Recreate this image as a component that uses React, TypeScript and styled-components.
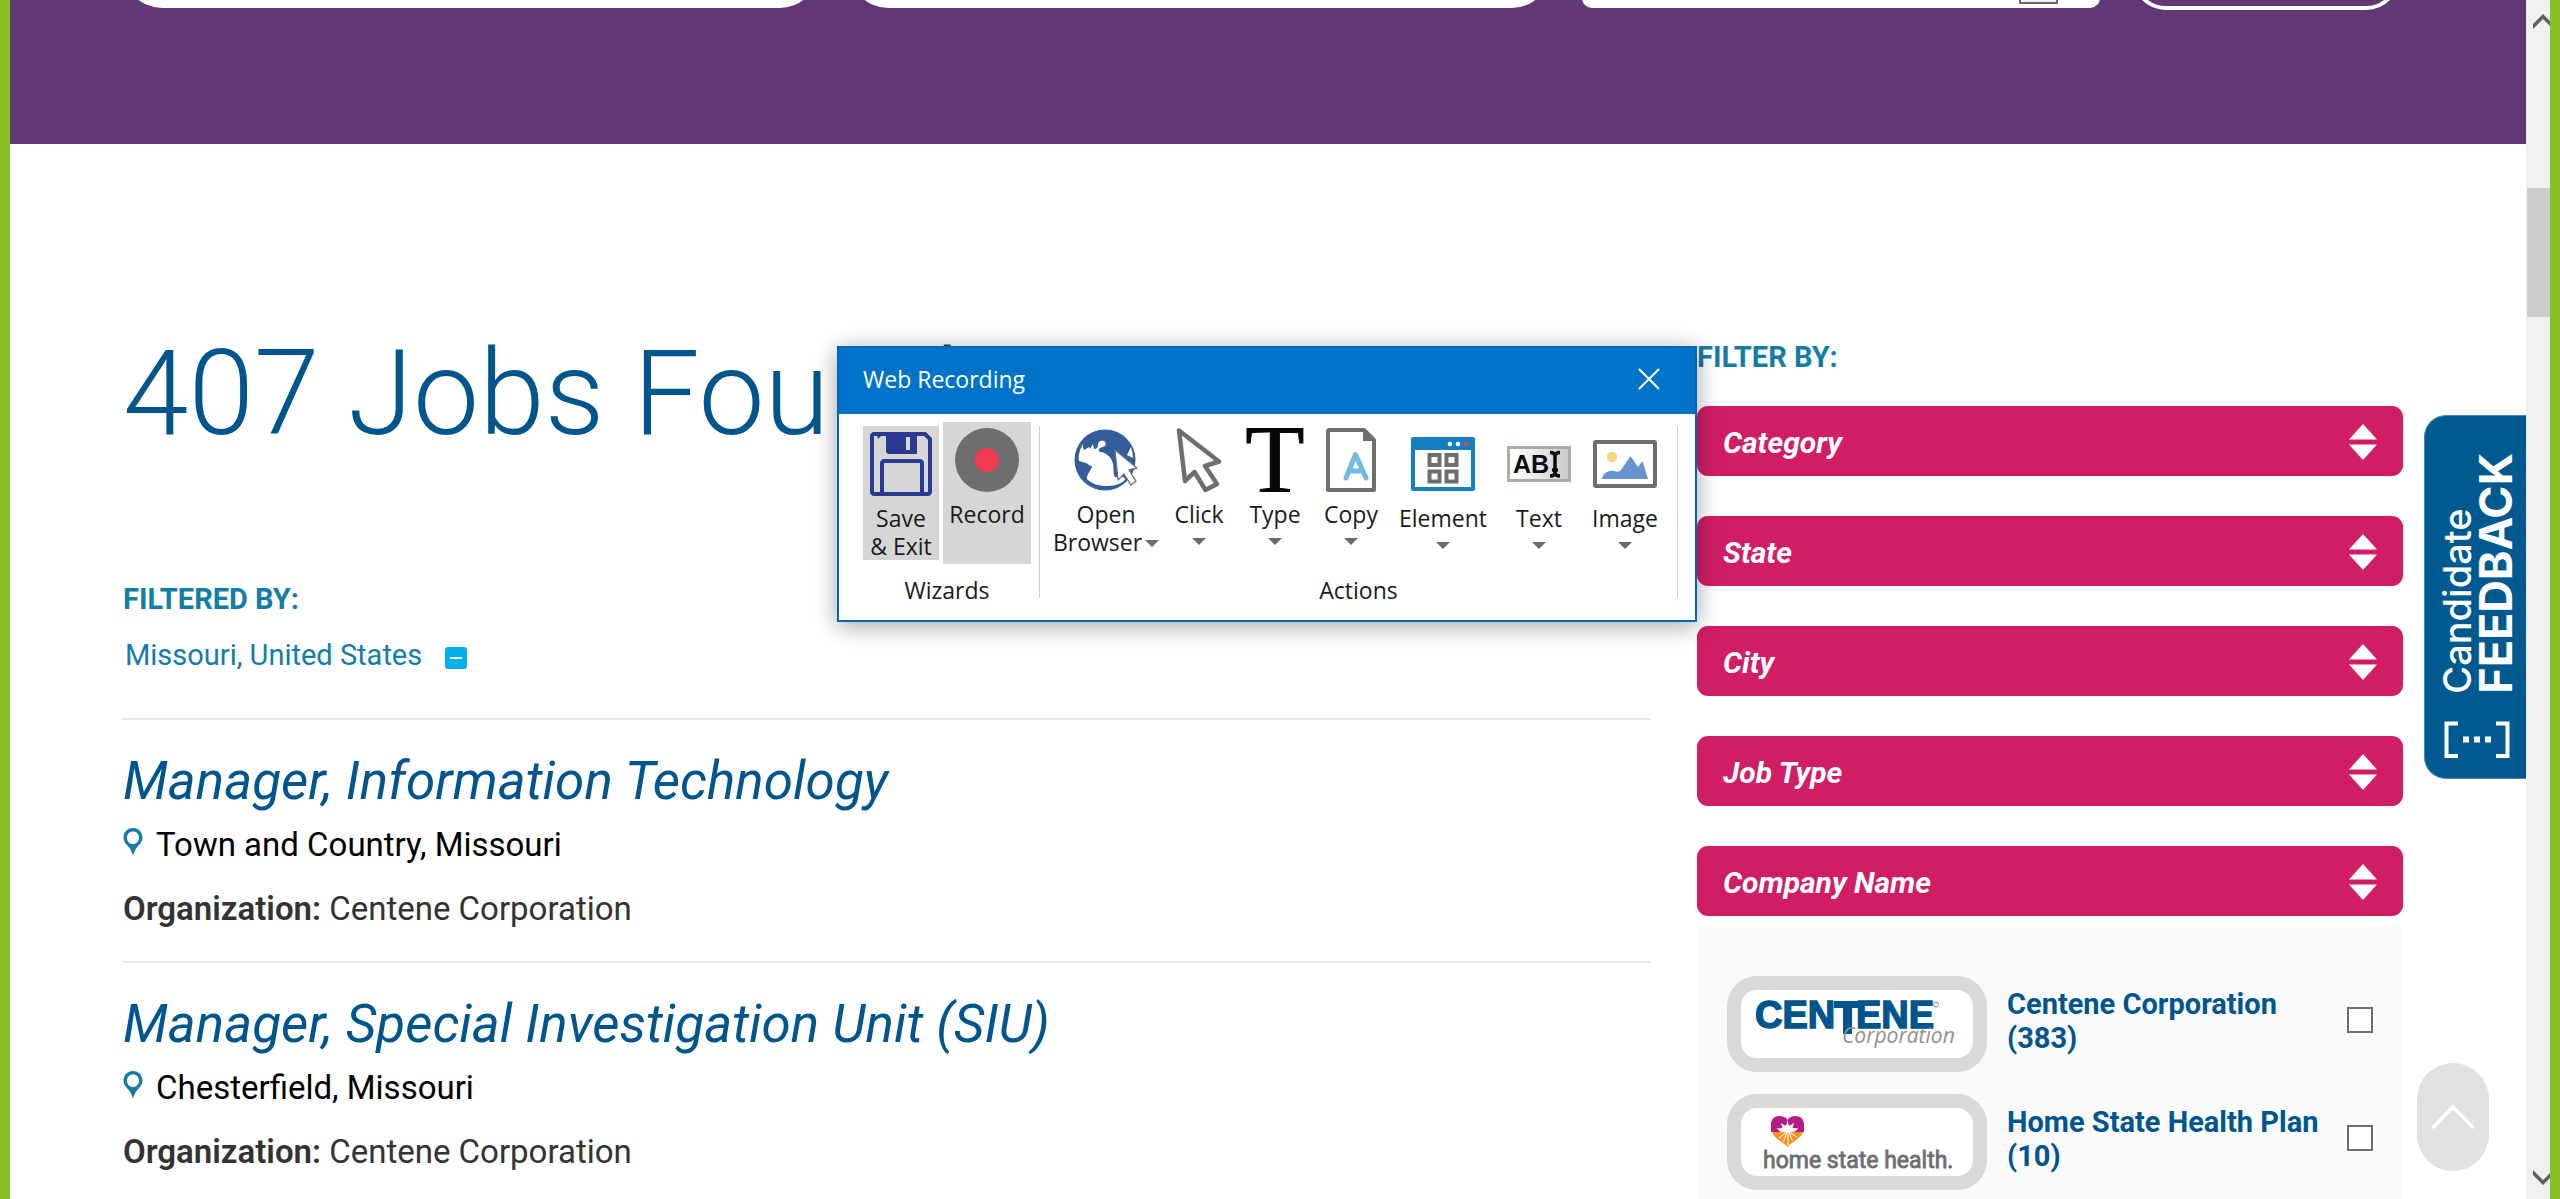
import React from "react";
import styled, { createGlobalStyle } from "styled-components";

const GlobalStyle = createGlobalStyle`
  *, *::before, *::after { box-sizing: border-box; }
  body {
    margin: 0;
    background: #fff;
    font-family: Roboto, "Liberation Sans", sans-serif;
    color: #333;
  }
  h1, h2, h3, p, ul { margin: 0; padding: 0; }
  ul { list-style: none; }
  button, input { font: inherit; }
  a { color: inherit; text-decoration: none; }
`;

/* ---------- Browser frame ---------- */

const Frame = styled.div`
  position: relative;
  display: flex;
  height: 100vh;
  overflow: hidden;
  border: solid #8cbe28;
  border-width: 0 10px;
`;

const Page = styled.div`
  flex: 1;
  min-width: 0;
`;

const ScrollTrack = styled.div`
  display: flex;
  flex-direction: column;
  flex: none;
  width: 24px;
  padding: 14px 0;
  overflow: hidden;
  background: #f0f0f0;

  svg {
    flex: none;
    margin-left: 7px;
  }
`;

const ScrollThumb = styled.div`
  height: 129px;
  margin: 159px 0 auto 1px;
  background: #cdcdcd;
`;

/* ---------- Search band ---------- */

const Hero = styled.header`
  height: 144px;
  padding: 0 126px 0 114px;
  overflow: hidden;
  background: #603876;
`;

const SearchForm = styled.form`
  display: grid;
  grid-template-columns: 694fr 700fr 518fr 268fr;
  column-gap: 32px;
  height: 90px;
  margin-top: -80px;
`;

const SearchInput = styled.input`
  width: 100%;
  height: 88px;
  padding: 0 30px;
  border: 0;
  border-radius: 38px;
  background: #fff;
  font-size: 32px;
`;

const RadiusField = styled.div`
  display: flex;
  justify-content: flex-end;
  align-items: flex-end;
  height: 88px;
  padding: 0 42px 4px;
  border-radius: 10px;
  background: #fff;
`;

const RadiusButton = styled.button`
  width: 39px;
  height: 40px;
  border: 2px solid #696969;
  background: #f0f0f0;
`;

const SearchButton = styled.button`
  height: 90px;
  border: 4px solid #fff;
  border-radius: 34px;
  background: transparent;
`;

/* ---------- Main columns ---------- */

const Main = styled.main`
  display: grid;
  grid-template-columns: 1528fr 706fr;
  column-gap: 46px;
  padding: 178px 123px 0 113px;
`;

const Results = styled.section`
  min-width: 0;
`;

const Heading = styled.h1`
  color: #00558c;
  font-size: 118px;
  font-weight: 300;
  line-height: 144px;
  white-space: nowrap;
`;

const Label = styled.h3`
  color: #147da5;
  font-size: 29px;
  font-weight: 700;
  line-height: 36px;
`;

const Applied = styled.div`
  margin-top: 115px;
`;

const AppliedItem = styled.div`
  display: flex;
  align-items: center;
  gap: 23px;
  margin: 20px 0 45px;
  padding-left: 2px;
  color: #147da5;
  font-size: 29px;
  line-height: 36px;
`;

const RemoveButton = styled.button`
  display: grid;
  place-items: center;
  width: 22px;
  height: 22px;
  margin-top: 6px;
  padding: 0;
  border: 0;
  border-radius: 3px;
  background: #00b1ec;

  &::before {
    content: "";
    width: 12px;
    height: 2px;
    background: #fff;
  }
`;

const Job = styled.li`
  padding: 31px 0 32px;
  border-top: 2px solid #e6e6e6;
`;

const JobTitle = styled.h2`
  color: #00558c;
  font-size: 53px;
  font-style: italic;
  font-weight: 400;
  line-height: 60px;
`;

const JobPlace = styled.p`
  display: flex;
  gap: 13px;
  margin-top: 14px;
  color: #000;
  font-size: 33px;
  line-height: 40px;

  svg {
    flex: none;
    margin-top: 3px;
  }
`;

const JobOrg = styled.p`
  margin-top: 24px;
  font-size: 33px;
  line-height: 40px;

  b { font-weight: 600; }
`;

/* ---------- Filters ---------- */

const Filters = styled.aside`
  padding-top: 17px;
`;

const FilterStack = styled.div`
  display: grid;
  row-gap: 40px;
  margin-top: 31px;
`;

const FilterBar = styled.button`
  display: flex;
  align-items: center;
  justify-content: space-between;
  height: 70px;
  padding: 2px 26px 0;
  border: 0;
  border-radius: 11px;
  background: #d01e65;
  color: #fff;
  font-size: 30px;
  font-style: italic;
  font-weight: 700;
`;

const CompanyList = styled.ul`
  display: grid;
  row-gap: 22px;
  margin-top: 10px;
  padding: 50px 30px;
  background: #fafafa;
`;

const CompanyRow = styled.label`
  display: flex;
  align-items: center;
  gap: 20px;
  height: 96px;
`;

const LogoBox = styled.span`
  flex: none;
  width: 260px;
  height: 96px;
  border: 14px solid #d9d9d9;
  border-radius: 30px;
  background: #fff;

  svg { display: block; }
`;

const CompanyName = styled.span`
  flex: 1;
  padding-bottom: 6px;
  color: #00558c;
  font-size: 29px;
  font-weight: 700;
  line-height: 34px;
  white-space: nowrap;

  span { display: block; }
`;

const Check = styled.input`
  appearance: none;
  flex: none;
  width: 26px;
  height: 26px;
  margin: 0 0 8px;
  border: 2px solid #6e6e6e;
  background: #fff;
`;

/* ---------- Floating controls ---------- */

const FeedbackTab = styled.button`
  position: absolute;
  top: 415px;
  right: 24px;
  display: flex;
  align-items: center;
  gap: 27px;
  width: 102px;
  height: 364px;
  padding: 0 16px 19px 19px;
  border: 1px solid #4a87ad;
  border-right: 0;
  border-radius: 22px 0 0 22px;
  background: #005a8f;
  color: #fff;
  flex-direction: column;
  justify-content: flex-end;
`;

const FeedbackText = styled.span`
  writing-mode: vertical-rl;
  transform: rotate(180deg);
  font-family: Inter, sans-serif;
  font-size: 38px;
  font-weight: 500;
  line-height: 38px;
  text-align: left;

  b {
    display: block;
    font-size: 45px;
    font-weight: 700;
    line-height: 40px;
  }
`;

const ToTop = styled.a`
  position: absolute;
  right: 61px;
  bottom: 28px;
  display: grid;
  place-items: center;
  width: 72px;
  height: 108px;
  border-radius: 36px;
  background: #e1e1e1;
  box-shadow: 0 0 0 3px #fff;
`;

/* ---------- Recorder window ---------- */

const Recorder = styled.section`
  position: absolute;
  top: 346px;
  left: 827px;
  width: 860px;
  border: 2px solid #0067b8;
  background: #fff;
  box-shadow: 0 4px 22px rgba(0, 0, 0, 0.36);
  color: #1b1b1b;
  font-family: "Open Sans", "Noto Sans", sans-serif;
  font-size: 23px;
`;

const TitleBar = styled.div`
  display: flex;
  align-items: center;
  justify-content: space-between;
  height: 66px;
  padding: 0 31px 4px 24px;
  background: #0073c8;
  color: #fff;
`;

const CloseButton = styled.button`
  display: grid;
  place-items: center;
  padding: 4px;
  border: 0;
  background: none;
`;

const Ribbon = styled.div`
  display: flex;
  padding: 8px 17px 14px 24px;
`;

const Group = styled.div<{ $wide?: boolean }>`
  flex: ${(p) => (p.$wide ? 1 : "none")};
`;

const GroupTools = styled.div<{ $inset?: boolean }>`
  display: flex;
  align-items: center;
  gap: 4px;
  height: 142px;
  padding: ${(p) => (p.$inset ? "0 10px 0 13px" : 0)};
`;

const GroupName = styled.div`
  margin-top: 10px;
  line-height: 32px;
  text-align: center;
`;

const Divider = styled.div`
  width: 2px;
  height: 172px;
  margin: 4px 0 0;
  background: #cfcfcf;
`;

const WizardDivider = styled(Divider)`
  margin-left: 8px;
`;

const Tool = styled.button<{ $w: number; $h?: number; $low?: boolean; $on?: boolean }>`
  display: flex;
  flex-direction: column;
  align-items: center;
  flex: none;
  width: ${(p) => p.$w}px;
  height: ${(p) => p.$h ?? 142}px;
  padding: ${(p) => (p.$low ? 10 : 6)}px 0 0;
  border: 0;
  background: ${(p) => (p.$on ? "#d6d6d6" : "none")};
  color: inherit;
  line-height: 28px;
  white-space: nowrap;

  > svg { flex: none; margin-bottom: 8px; }
`;

const Caret = styled.i<{ $inline?: boolean }>`
  display: ${(p) => (p.$inline ? "inline-block" : "block")};
  margin: ${(p) => (p.$inline ? "0 0 4px 3px" : "10px 0 0")};
  border: solid transparent;
  border-width: 7px 7px 0;
  border-top-color: #6a6a6a;
`;

/* ---------- Icons ---------- */

const Pin = () => (
  <svg width="20" height="28" viewBox="0 0 20 28" aria-hidden="true">
    <path
      d="M10 0C4.400 0 .5 4.300 .5 9.800c0 3.900 3 6.800 5.200 9.300C7.600 21.400 9 24.500 10 28c1-3.500 2.400-6.600 4.300-8.900 2.200-2.500 5.200-5.400 5.200-9.300C19.500 4.300 15.600 0 10 0zm0 3.500c3.500 0 6 2.700 6 6.200s-2.500 6.300-6 6.300-6-2.800-6-6.300 2.500-6.200 6-6.200z"
      fill="#147da5"
    />
  </svg>
);

const Sorter = () => (
  <svg width="28" height="36" viewBox="0 0 28 36" aria-hidden="true">
    <path d="M14 0 28 15.500H0zM0 20.500h28L14 36z" fill="#fff" />
  </svg>
);

const ScrollArrow = ({ down }: { down?: boolean }) => (
  <svg width="20" height="15" viewBox="0 0 20 15" aria-hidden="true">
    <path
      d={down ? "M0 0 10 10 20 0V5L10 15 0 5z" : "M0 15 10 5 20 15V10L10 0 0 10z"}
      fill="#606060"
    />
  </svg>
);

const CenteneLogo = () => (
  <svg width="232" height="68" viewBox="0 0 232 68" role="img" aria-label="Centene Corporation">
    <text x="14" y="38" fontFamily="Liberation Sans, sans-serif" fontWeight="700" fontSize="38" fill="#00558c" stroke="#00558c" strokeWidth="1.500">
      CEN
    </text>
    <path d="M93 11h26v7h-8v26h-9V18h-9z" fill="#00558c" />
    <text x="115" y="38" fontFamily="Liberation Sans, sans-serif" fontWeight="700" fontSize="38" fill="#00558c" stroke="#00558c" strokeWidth="1.500">
      ENE
    </text>
    <circle cx="195" cy="14.500" r="2.500" fill="none" stroke="#5b8fb3" />
    <text x="101" y="53" fontFamily="Open Sans, sans-serif" fontStyle="italic" fontSize="21" fill="#8f8f8f">
      Corporation
    </text>
  </svg>
);

const HomeStateLogo = () => (
  <svg width="232" height="68" viewBox="0 0 232 68" role="img" aria-label="Home State Health">
    <path d="M30 24v-8c0-5 4-8 8-8 4 0 7 1 8.500 4C48 9 51 8 55 8c4 0 8 3 8 8v8z" fill="#b11c86" />
    <path d="M31 24h31c-2 7-12 10-15.500 15C43 34 33 31 31 24z" fill="#f6921e" />
    <path d="m46.500 12 1.500 6 5-3-1.500 5 6 .5-4.500 3.500-6.500.5-6.500-.5-4.500-3.500 6-.5-1.500-5 5 3z" fill="#fff" />
    <path d="m46 24-8 6M46 24l-3.500 10M47 24v13M48 24l3.500 9M48 24l8 5" stroke="#fff" strokeWidth="1" />
    <text x="22" y="60" fontFamily="Roboto, sans-serif" fontSize="23" fill="#6d6e71" stroke="#6d6e71" strokeWidth="0.800">
      home state health.
    </text>
  </svg>
);

const FeedbackIcon = () => (
  <svg width="66" height="38" viewBox="0 0 66 38" aria-hidden="true">
    <path d="M14 2.500H2.500V35H14M52 2.500h11.500V35H52" fill="none" stroke="#fff" strokeWidth="4" />
    <path d="M19 15.500h6v6h-6zM30 15.500h6v6h-6zM41 15.500h6v6h-6z" fill="#fff" />
  </svg>
);

const SaveIcon = () => (
  <svg width="64" height="64" viewBox="0 0 64 64" aria-hidden="true">
    <path d="M5 2h51l5 5v53c0 1-1 2-2 2H5c-1 0-2-1-2-2V4c0-1 1-2 2-2z" fill="none" stroke="#2b3990" strokeWidth="4" />
    <path d="M17 2h31v20H19l-2-2zM8 3h5l-4 4z" fill="#2b3990" />
    <path d="M37 5h4v13h-4z" fill="#d6d6d6" />
    <path d="M13 62V31c0-1 1-2 2-2h36c1 0 2 1 2 2v31" fill="none" stroke="#2b3990" strokeWidth="4" />
  </svg>
);

const RecordIcon = () => (
  <svg width="64" height="64" viewBox="0 0 64 64" aria-hidden="true">
    <circle cx="32" cy="32" r="32" fill="#6d6e70" />
    <circle cx="32" cy="32" r="12.200" fill="#ef3b52" />
  </svg>
);

const GlobeIcon = () => (
  <svg width="64" height="64" viewBox="0 0 64 64" aria-hidden="true">
    <circle cx="31" cy="32" r="30.500" fill="#345d9c" />
    <path
      d="M5 33c-1-6 1-12 4-17 0 3 0 5 1 6l5-3 1 2 3-5 1 5c3 0 4-2 4-4 0-4 3-5 6-4 2 1 2 4 1 5l-5 2c-2 2-1 4 1 4 6 1 11 6 12 12 1 5 0 10 2 13h6c4 0 5 2 3 4-5 4-11 5-18 5-7 0-14-2-19-7-1-4 3-8 5-12l-6-4z"
      fill="#fff"
    />
    <path d="m7 34 5 4 6 0-6 12c-3-3-6-9-6-15z" fill="#345d9c" />
    <path d="M57 19c1 4 2 7 2 11l-6-3z" fill="#fff" />
    <path d="m41 22 22 18-8 2 7 11-5 4-7-11-6 6z" fill="#fff" stroke="#6d6e70" strokeWidth="1.300" strokeLinejoin="round" />
  </svg>
);

const ClickIcon = () => (
  <svg width="64" height="64" viewBox="0 0 64 64" aria-hidden="true">
    <path
      d="m12 2.500 40 31-14 4.500 12 18-11.500 6-11-18L18 53z"
      fill="#fff"
      stroke="#6d6e70"
      strokeWidth="4.500"
      strokeLinejoin="round"
    />
  </svg>
);

const TypeIcon = () => (
  <svg width="64" height="64" viewBox="0 0 64 64" aria-hidden="true">
    <text x="32" y="64" textAnchor="middle" fontFamily="Liberation Serif, serif" fontSize="97" fill="#050807" stroke="#050807" strokeWidth="1">
      T
    </text>
  </svg>
);

const CopyIcon = () => (
  <svg width="64" height="64" viewBox="0 0 64 64" aria-hidden="true">
    <path d="M10 2h35l10 10v50H9V3z" fill="#fff" stroke="#6d6e70" strokeWidth="4" strokeLinejoin="round" />
    <path d="M44 1v12h12z" fill="#6d6e70" />
    <path d="m27 50 9.500-23.500L47 50M30 43h13" fill="none" stroke="#74b9e3" strokeWidth="5" strokeLinecap="round" strokeLinejoin="round" />
  </svg>
);

const ElementIcon = () => (
  <svg width="64" height="64" viewBox="0 0 64 64" aria-hidden="true">
    <rect y="5" width="64" height="54" rx="2" fill="#137fc0" />
    <path d="M4 18h56v37H4z" fill="#fff" />
    <circle cx="39" cy="12" r="2.300" fill="#fff" />
    <circle cx="47" cy="12" r="2.300" fill="#fff" />
    <circle cx="55" cy="12" r="2.300" fill="#ef3b52" />
    <path d="M18.500 23h10v10h-10zM35.500 23h10v10h-10zM18.500 39.500h10v10h-10zM35.500 39.500h10v10h-10z" fill="none" stroke="#6d6e70" strokeWidth="4" />
  </svg>
);

const TextIcon = () => (
  <svg width="64" height="64" viewBox="0 0 64 64" aria-hidden="true">
    <defs>
      <linearGradient id="textFade">
        <stop offset="0.100" stopColor="#fff" />
        <stop offset="1" stopColor="#c9c9cc" />
      </linearGradient>
    </defs>
    <rect x="1.500" y="15.500" width="61" height="33" fill="url(#textFade)" stroke="#acaca3" strokeWidth="3" />
    <text x="6" y="41" fontFamily="Liberation Sans, sans-serif" fontWeight="700" fontSize="25" fill="#0b0b0b">
      AB
    </text>
    <path d="M43 20.500q5 0 5 4 0-4 5-4M43 44q5 0 5-4 0 4 5 4M48 23v19M45 38h6" fill="none" stroke="#0b0b0b" strokeWidth="3.500" />
  </svg>
);

const ImageIcon = () => (
  <svg width="64" height="64" viewBox="0 0 64 64" aria-hidden="true">
    <rect x="2" y="10" width="60" height="44" rx="1" fill="#fff" stroke="#6d6e70" strokeWidth="4" />
    <circle cx="19" cy="25" r="5.200" fill="#efd97b" />
    <path d="M9 47c1-6 7-9 12-8 3 1 5 1 7-1l9.500-14L45 35l4.500-6L55 47z" fill="#6793cf" />
  </svg>
);

/* ---------- Data ---------- */

const jobs = [
  { title: "Manager, Information Technology", place: "Town and Country, Missouri" },
  { title: "Manager, Special Investigation Unit (SIU)", place: "Chesterfield, Missouri" },
];

const filters = ["Category", "State", "City", "Job Type", "Company Name"];

const companies = [
  { name: "Centene Corporation", count: 383, logo: <CenteneLogo /> },
  { name: "Home State Health Plan", count: 10, logo: <HomeStateLogo /> },
];

const actions = [
  { name: "Click", width: 72, low: false, icon: <ClickIcon /> },
  { name: "Type", width: 72, low: false, icon: <TypeIcon /> },
  { name: "Copy", width: 72, low: false, icon: <CopyIcon /> },
  { name: "Element", width: 104, low: true, icon: <ElementIcon /> },
  { name: "Text", width: 80, low: true, icon: <TextIcon /> },
  { name: "Image", width: 84, low: true, icon: <ImageIcon /> },
];

export default function App() {
  return (
    <>
      <GlobalStyle />
      <Frame>
        <Page>
          <Hero>
            <SearchForm>
              <SearchInput aria-label="Keyword" />
              <SearchInput aria-label="Location" />
              <RadiusField>
                <RadiusButton type="button" aria-label="Radius" />
              </RadiusField>
              <SearchButton type="button" aria-label="Search" />
            </SearchForm>
          </Hero>

          <Main>
            <Results>
              <Heading>407 Jobs Found</Heading>
              <Applied>
                <Label>FILTERED BY:</Label>
                <AppliedItem>
                  <a href="#missouri">Missouri, United States</a>
                  <RemoveButton aria-label="Remove Missouri, United States" />
                </AppliedItem>
              </Applied>
              <ul>
                {jobs.map((job) => (
                  <Job key={job.title}>
                    <JobTitle>
                      <a href="#job">{job.title}</a>
                    </JobTitle>
                    <JobPlace>
                      <Pin />
                      {job.place}
                    </JobPlace>
                    <JobOrg>
                      <b>Organization:</b> Centene Corporation
                    </JobOrg>
                  </Job>
                ))}
              </ul>
            </Results>

            <Filters>
              <Label>FILTER BY:</Label>
              <FilterStack>
                {filters.map((name) => (
                  <FilterBar key={name}>
                    {name}
                    <Sorter />
                  </FilterBar>
                ))}
              </FilterStack>
              <CompanyList>
                {companies.map((c) => (
                  <li key={c.name}>
                    <CompanyRow>
                      <LogoBox>{c.logo}</LogoBox>
                      <CompanyName>
                        {c.name} <span>({c.count})</span>
                      </CompanyName>
                      <Check type="checkbox" />
                    </CompanyRow>
                  </li>
                ))}
              </CompanyList>
            </Filters>
          </Main>
        </Page>

        <ScrollTrack>
          <ScrollArrow />
          <ScrollThumb />
          <ScrollArrow down />
        </ScrollTrack>

        <FeedbackTab>
          <FeedbackText>
            Candidate<b>FEEDBACK</b>
          </FeedbackText>
          <FeedbackIcon />
        </FeedbackTab>

        <ToTop href="#top" aria-label="Back to top">
          <svg width="44" height="26" viewBox="0 0 44 26" aria-hidden="true">
            <path d="M1.500 24 22 3l20.500 21" fill="none" stroke="#fff" strokeWidth="3.500" />
          </svg>
        </ToTop>

        <Recorder aria-label="Web Recording">
          <TitleBar>
            <span>Web Recording</span>
            <CloseButton aria-label="Close">
              <svg width="22" height="22" viewBox="0 0 22 22" aria-hidden="true">
                <path d="m1 1 20 20M21 1 1 21" stroke="#fff" strokeWidth="2" />
              </svg>
            </CloseButton>
          </TitleBar>
          <Ribbon>
            <Group>
              <GroupTools>
                <Tool $w={76} $h={134} $on>
                  <SaveIcon />
                  <span>
                    Save
                    <br />
                    &amp; Exit
                  </span>
                </Tool>
                <Tool $w={88} $on>
                  <RecordIcon />
                  Record
                </Tool>
              </GroupTools>
              <GroupName>Wizards</GroupName>
            </Group>
            <WizardDivider />
            <Group $wide>
              <GroupTools $inset>
                <Tool $w={106}>
                  <GlobeIcon />
                  <span>
                    Open
                    <br />
                    Browser
                    <Caret $inline />
                  </span>
                </Tool>
                {actions.map((a) => (
                  <Tool key={a.name} $w={a.width} $low={a.low}>
                    {a.icon}
                    {a.name}
                    <Caret />
                  </Tool>
                ))}
              </GroupTools>
              <GroupName>Actions</GroupName>
            </Group>
            <Divider />
          </Ribbon>
        </Recorder>
      </Frame>
    </>
  );
}
